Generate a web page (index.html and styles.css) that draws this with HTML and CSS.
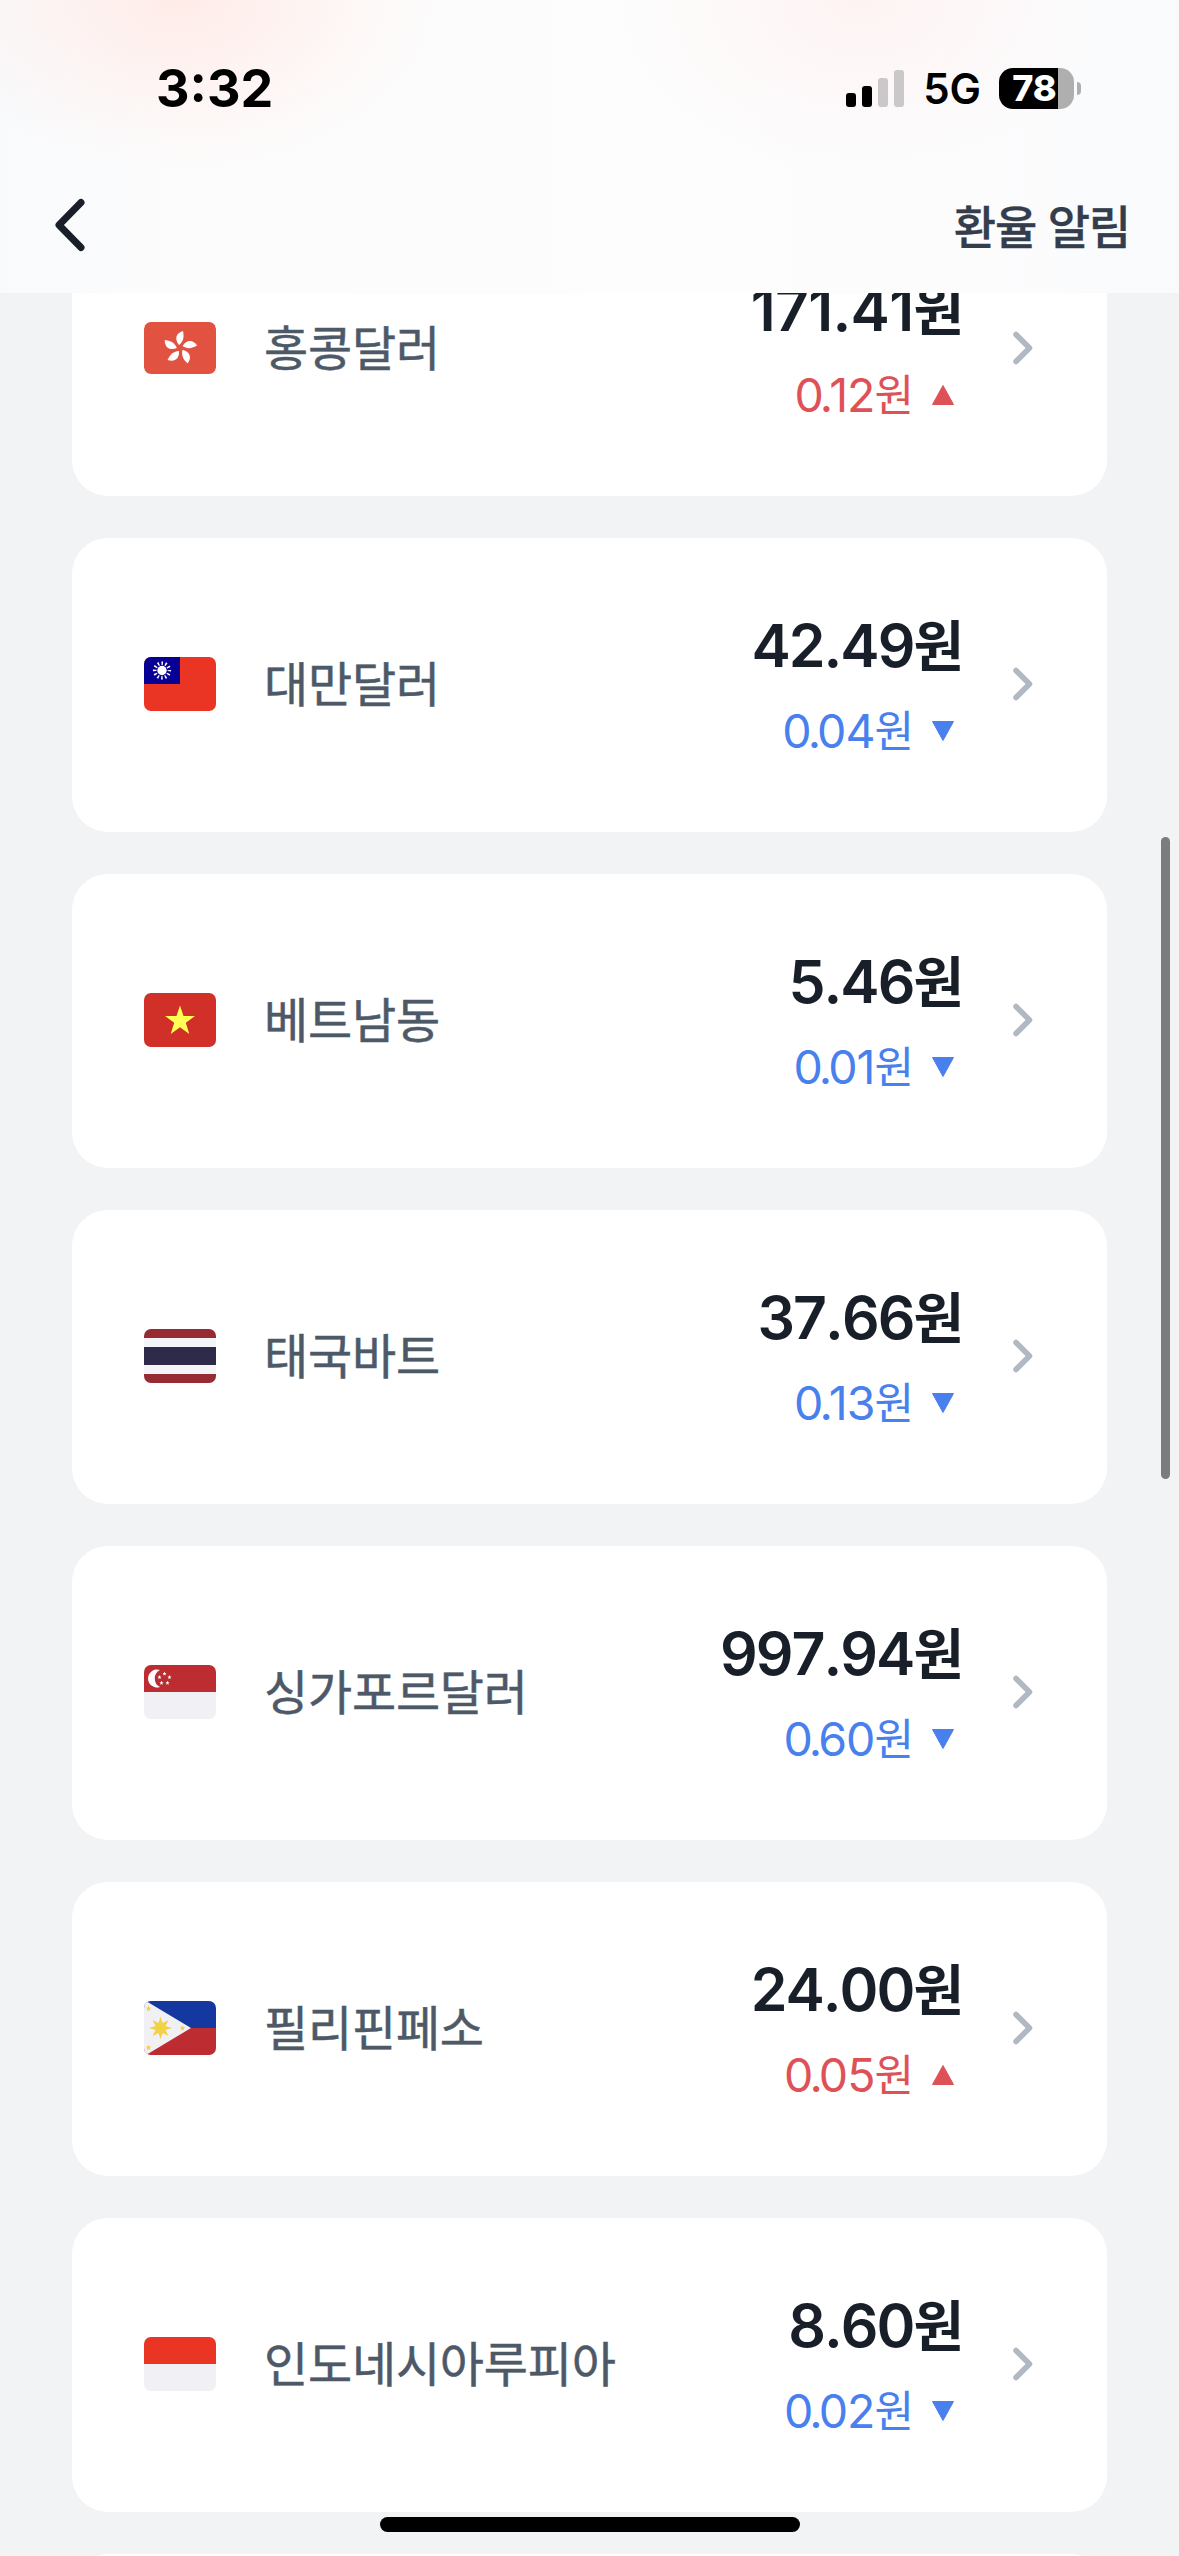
FILE: index.html
```html
<!DOCTYPE html>
<html lang="ko">
<head>
    <meta charset="UTF-8">
    <meta name="viewport" content="width=device-width, initial-scale=1.0">
    <title>환율</title>
    <link rel="stylesheet" href="styles.css">
</head>
<body>
    <div class="screen">
        <header class="header">
            <div class="status-bar">
                <span class="time">3:32</span>
                <div class="status-icons">
                    <svg class="signal" width="58" height="37" viewBox="0 0 58 37">
                        <rect x="0" y="23" width="10" height="14" rx="3" fill="#000"/>
                        <rect x="16" y="16" width="10" height="21" rx="3" fill="#000"/>
                        <rect x="32" y="8" width="10" height="29" rx="3" fill="#cbc8c9"/>
                        <rect x="48" y="0" width="10" height="37" rx="3" fill="#cbc8c9"/>
                    </svg>
                    <span class="network">5G</span>
                    <div class="battery"><span>78</span></div>
                    <div class="battery-cap"></div>
                </div>
            </div>
            <nav class="nav">
                <svg class="back" width="32" height="54" viewBox="0 0 32 54">
                    <path d="M27 4.5L5 27l22 22.5" fill="none" stroke="#191f28" stroke-width="7" stroke-linecap="round" stroke-linejoin="round"/>
                </svg>
                <span class="alarm">환율 알림</span>
            </nav>
        </header>

        <main class="list">
            <div class="card">
                <svg class="flag" viewBox="0 0 72 54">
                    <rect y="1" width="72" height="52" rx="7" fill="#e25241"/>
                    <g fill="#fff" transform="translate(36 27)">
                        <path id="petal" d="M-1-3C-6-9-4-15 3-17C4-12 4-7-1-3Z"/>
                        <use href="#petal" transform="rotate(72)"/>
                        <use href="#petal" transform="rotate(144)"/>
                        <use href="#petal" transform="rotate(216)"/>
                        <use href="#petal" transform="rotate(288)"/>
                    </g>
                </svg>
                <span class="name">홍콩달러</span>
                <div class="rate">
                    <div class="price wide">171.41<span class="won">원</span></div>
                    <div class="change up">0<i>.</i>12<span class="won">원</span><svg class="tri" viewBox="0 0 24 22"><path d="M12 1.5L22.5 20.5H1.5Z"/></svg></div>
                </div>
                <svg class="arrow" viewBox="0 0 24 36"><path d="M5 4.5L18.5 18L5 31.5"/></svg>
            </div>

            <div class="card">
                <svg class="flag" viewBox="0 0 72 54">
                    <rect width="72" height="54" fill="#ea3424"/>
                    <rect width="36" height="27" fill="#080094"/>
                    <circle cx="18" cy="13.5" r="4.7" fill="#fff"/>
                    <circle cx="18" cy="13.5" r="7.3" fill="none" stroke="#fff" stroke-width="3.6" stroke-dasharray="1.5 2.322" stroke-dashoffset="0.75"/>
                </svg>
                <span class="name">대만달러</span>
                <div class="rate">
                    <div class="price">42.49<span class="won">원</span></div>
                    <div class="change down">0<i>.</i>04<span class="won">원</span><svg class="tri" viewBox="0 0 24 22"><path d="M12 20.5L22.5 1.5H1.5Z"/></svg></div>
                </div>
                <svg class="arrow" viewBox="0 0 24 36"><path d="M5 4.5L18.5 18L5 31.5"/></svg>
            </div>

            <div class="card">
                <svg class="flag" viewBox="0 0 72 54">
                    <rect width="72" height="54" fill="#d03028"/>
                    <path d="M36 12.5l3.5 10.5h11.5l-9.2 6.8 3.5 11.2-9.3-6.7-9.3 6.7 3.5-11.2-9.2-6.8h11.5z" fill="#ffff54"/>
                </svg>
                <span class="name">베트남동</span>
                <div class="rate">
                    <div class="price">5.46<span class="won">원</span></div>
                    <div class="change down">0<i>.</i>01<span class="won">원</span><svg class="tri" viewBox="0 0 24 22"><path d="M12 20.5L22.5 1.5H1.5Z"/></svg></div>
                </div>
                <svg class="arrow" viewBox="0 0 24 36"><path d="M5 4.5L18.5 18L5 31.5"/></svg>
            </div>

            <div class="card">
                <svg class="flag" viewBox="0 0 72 54">
                    <rect width="72" height="54" fill="#962b34"/>
                    <rect y="9" width="72" height="36" fill="#f4f5f8"/>
                    <rect y="18" width="72" height="18" fill="#2d2a4a"/>
                </svg>
                <span class="name">태국바트</span>
                <div class="rate">
                    <div class="price">37.66<span class="won">원</span></div>
                    <div class="change down">0<i>.</i>13<span class="won">원</span><svg class="tri" viewBox="0 0 24 22"><path d="M12 20.5L22.5 1.5H1.5Z"/></svg></div>
                </div>
                <svg class="arrow" viewBox="0 0 24 36"><path d="M5 4.5L18.5 18L5 31.5"/></svg>
            </div>

            <div class="card">
                <svg class="flag" viewBox="0 0 72 54">
                    <rect width="72" height="54" fill="#f1f1f5"/>
                    <rect width="72" height="27" fill="#bc2c30"/>
                    <path d="M16 5a9 9 0 1 0 0 17a9.5 9.5 0 0 1 0-17z" fill="#fff"/>
                    <g fill="#fff">
                        <path id="star" d="M20.5 6.5l.6 1.4 1.4.1-1.1 1 .4 1.5-1.3-.8-1.3.8.4-1.5-1.1-1 1.4-.1z"/>
                        <use href="#star" x="5" y="3.5"/>
                        <use href="#star" x="-5" y="3.5"/>
                        <use href="#star" x="-3" y="9.3"/>
                        <use href="#star" x="3" y="9.3"/>
                    </g>
                </svg>
                <span class="name">싱가포르달러</span>
                <div class="rate">
                    <div class="price">997.94<span class="won">원</span></div>
                    <div class="change down">0<i>.</i>60<span class="won">원</span><svg class="tri" viewBox="0 0 24 22"><path d="M12 20.5L22.5 1.5H1.5Z"/></svg></div>
                </div>
                <svg class="arrow" viewBox="0 0 24 36"><path d="M5 4.5L18.5 18L5 31.5"/></svg>
            </div>

            <div class="card">
                <svg class="flag" viewBox="0 0 72 54">
                    <rect width="72" height="27" fill="#1437a0"/>
                    <rect y="27" width="72" height="27" fill="#bc2c30"/>
                    <path d="M0 0L2 0L47 27L2 54H0z" fill="#f1f1f5"/>
                    <g fill="#f3d145">
                        <circle cx="16.5" cy="27" r="5.5"/>
                        <path d="M14.5 22l2-6.5L18.5 22zM14.5 32l2 6.5L18.5 32zM11.5 25L5 27l6.5 2zM21.5 25L28 27l-6.5 2zM11.5 25L8.5 19l6 3zM21.5 25l3-6-6 3zM11.5 29L8.5 35l6-3zM21.5 29l3 6-6-3z"/>
                        <path d="M4.5 4.5l.8 2 2 .1-1.5 1.4.5 2.2-1.8-1.1-1.8 1.1.5-2.2L1.7 6.6l2-.1zM4.5 43.5l.8 2 2 .1-1.5 1.4.5 2.2-1.8-1.1-1.8 1.1.5-2.2-1.5-1.4 2-.1zM38.5 24l.8 2 2 .1-1.5 1.4.5 2.2-1.8-1.1-1.8 1.1.5-2.2-1.5-1.4 2-.1z"/>
                    </g>
                </svg>
                <span class="name">필리핀페소</span>
                <div class="rate">
                    <div class="price">24.00<span class="won">원</span></div>
                    <div class="change up">0<i>.</i>05<span class="won">원</span><svg class="tri" viewBox="0 0 24 22"><path d="M12 1.5L22.5 20.5H1.5Z"/></svg></div>
                </div>
                <svg class="arrow" viewBox="0 0 24 36"><path d="M5 4.5L18.5 18L5 31.5"/></svg>
            </div>

            <div class="card">
                <svg class="flag" viewBox="0 0 72 54">
                    <rect width="72" height="54" fill="#f1f1f5"/>
                    <rect width="72" height="27" fill="#ea3424"/>
                </svg>
                <span class="name">인도네시아루피아</span>
                <div class="rate">
                    <div class="price">8.60<span class="won">원</span></div>
                    <div class="change down">0<i>.</i>02<span class="won">원</span><svg class="tri" viewBox="0 0 24 22"><path d="M12 20.5L22.5 1.5H1.5Z"/></svg></div>
                </div>
                <svg class="arrow" viewBox="0 0 24 36"><path d="M5 4.5L18.5 18L5 31.5"/></svg>
            </div>

            <div class="card"></div>
        </main>

        <div class="scrollbar"></div>
        <div class="home-indicator"></div>
    </div>
</body>
</html>
```
FILE: styles.css
```css
:root {
    --bg: #f1f3f5;
    --text: #191f28;
    --label: #4e5968;
    --up: #de5257;
    --down: #4880ee;
}

* {
    margin: 0;
    padding: 0;
    box-sizing: border-box;
}

body {
    font-family: "Inter", "Noto Sans CJK KR", sans-serif;
    background: var(--bg);
    color: var(--text);
}

.screen {
    position: relative;
    display: flex;
    flex-direction: column;
    width: 1179px;
    height: 2556px;
    overflow: hidden;
}

.header {
    position: relative;
    z-index: 1;
    flex: none;
    height: 293px;
    background:
        radial-gradient(ellipse 260px 170px at 180px 0, #ffebe8 0%, rgba(255, 238, 235, 0.6) 45%, rgba(253, 250, 250, 0) 100%),
        radial-gradient(ellipse 240px 170px at 860px 0, #fef3f3 0%, rgba(253, 252, 252, 0) 100%),
        linear-gradient(90deg, #f8fafc 0%, #fcfcfc 15%, #fdfdfd 60%, #fcfcfd 85%, #f8fafc 100%);
}

.status-bar {
    display: flex;
    justify-content: space-between;
    align-items: center;
    height: 176px;
    padding: 0 98px 0 156px;
}

.time {
    font-size: 52px;
    font-weight: 700;
    color: #000;
}

.status-icons {
    display: flex;
    align-items: center;
    color: #000;
}

.network {
    margin: 2px 18px 0 19px;
    font-size: 42px;
    font-weight: 600;
    line-height: 44px;
}

.battery {
    display: flex;
    justify-content: center;
    align-items: center;
    width: 75px;
    height: 41px;
    padding-right: 4px;
    border-radius: 14px;
    background: linear-gradient(90deg, #000 59px, #afafaf 59px);
    color: #fff;
    font-size: 36px;
    font-weight: 800;
}

.battery-cap {
    width: 4px;
    height: 13px;
    margin-left: 3px;
    border-radius: 0 4px 4px 0;
    background: #afafaf;
}

.nav {
    display: flex;
    justify-content: space-between;
    align-items: center;
    height: 98px;
    padding: 0 49px 0 54px;
}

.alarm {
    margin-bottom: 3px;
    font-family: "Noto Sans CJK KR", sans-serif;
    font-size: 46px;
    font-weight: 500;
    line-height: 60px;
    letter-spacing: -1.2px;
    -webkit-text-stroke: 0.3px currentColor;
    color: #333d4b;
}

.list {
    display: flex;
    flex-direction: column;
    gap: 42px;
    margin-top: -91px;
    padding: 0 72px;
}

.card {
    display: flex;
    flex: none;
    align-items: center;
    height: 294px;
    padding: 0 72px;
    border-radius: 36px;
    background: #fff;
}

.flag {
    width: 72px;
    height: 54px;
    margin-bottom: 2px;
    border-radius: 7px;
    overflow: hidden;
}

.name {
    margin: 0 0 9px 48px;
    font-family: "Noto Sans CJK KR", sans-serif;
    font-size: 48px;
    line-height: 60px;
    letter-spacing: -0.2px;
    -webkit-text-stroke: 0.5px currentColor;
    color: var(--label);
}

.rate {
    display: flex;
    flex-direction: column;
    align-items: flex-end;
    gap: 31px;
    margin-left: auto;
    margin-bottom: 4px;
    white-space: nowrap;
}

.price {
    height: 60px;
    font-size: 59px;
    font-weight: 600;
    line-height: 58px;
    letter-spacing: -2px;
    font-kerning: none;
}

.price.wide {
    letter-spacing: -0.7px;
}

.won {
    position: relative;
    top: -1px;
    font-family: "Noto Sans CJK KR", sans-serif;
    letter-spacing: 0;
}

.price .won {
    margin-right: -3px;
    font-size: 55px;
}

.change {
    height: 48px;
    font-size: 46.5px;
    line-height: 48px;
    letter-spacing: -1px;
}

.change .won {
    font-size: 43px;
}

.change i {
    margin: 0 -3px;
    font-style: normal;
}

.up {
    color: var(--up);
}

.down {
    color: var(--down);
}

.tri {
    width: 24px;
    height: 22px;
    margin: 0 6px 6px 17px;
    fill: currentColor;
    stroke: currentColor;
    stroke-linejoin: round;
}

.arrow {
    width: 24px;
    height: 36px;
    margin: 0 0 3px 50px;
    fill: none;
    stroke: #b0b8c1;
    stroke-width: 5.5px;
    stroke-linecap: round;
    stroke-linejoin: round;
}

.scrollbar {
    position: absolute;
    top: 837px;
    right: 9px;
    width: 9px;
    height: 642px;
    border-radius: 5px;
    background: #7b7c7e;
}

.home-indicator {
    position: absolute;
    bottom: 24px;
    left: 380px;
    width: 420px;
    height: 15px;
    border-radius: 8px;
    background: #000;
}
```
